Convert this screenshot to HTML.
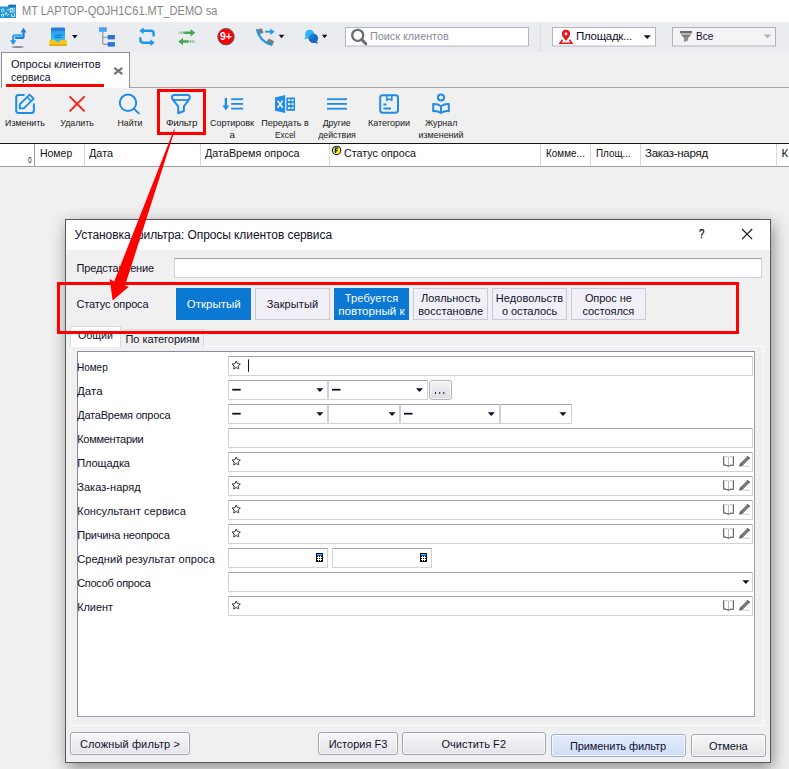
<!DOCTYPE html>
<html>
<head>
<meta charset="utf-8">
<title>Filter</title>
<style>
*{box-sizing:border-box;margin:0;padding:0}
html,body{width:789px;height:769px;overflow:hidden;background:#f0f0f0;font-family:"Liberation Sans",sans-serif;}
.abs{position:absolute}
.t{position:absolute;white-space:nowrap;line-height:1}
#titlebar{left:0;top:0;width:789px;height:22px;background:#fff}
#tb1{left:0;top:22px;width:789px;height:30px;background:#ebecf0}
#tabrow{left:0;top:52px;width:789px;height:36px;background:#f0f0f0}
#tb2{left:0;top:88px;width:789px;height:55px;background:#f0f0f0}
#ghead{left:0;top:142.6px;width:789px;height:24.2px;background:#fff;border-top:1.6px solid #141414;border-bottom:1px solid #a0a0a0}
.gcol{position:absolute;top:144.2px;width:1px;height:21.6px;background:#d8d8d8}
.gh{position:absolute;top:148px;font-size:11.5px;color:#111;white-space:nowrap;line-height:1}
.lbl2{position:absolute;font-size:9.8px;color:#1a1a1a;text-align:center;line-height:12px;white-space:nowrap;transform:translateX(-50%)}
/* dialog */
#dlg{left:65px;top:219px;width:706px;height:544px;background:#f0f0f0;border:1px solid #5a5a5a;box-shadow:2px 5px 15px 0 rgba(0,0,0,.43)}
#dtitle{left:66px;top:220px;width:704px;height:30px;background:#fff}
.flabel{position:absolute;left:77.2px;font-size:11px;color:#10102a;white-space:nowrap;line-height:1}
.inp{position:absolute;height:20px;background:#fff;border:1px solid #d0d1dc;border-top-color:#9fa2b4}
.sbtn{position:absolute;top:288px;height:31.6px;width:75px;font-size:11px;text-align:center;line-height:13px;white-space:nowrap}
.sbtn.on{background:#0b78d4;color:#fff}
.sbtn.off{background:#f0f0f6;color:#10102a;border:1px solid #c9cad9}
.btn{position:absolute;height:23px;border:1px solid #a6a6b0;border-radius:3px;background:linear-gradient(#f8f8fa,#e3e3e9);font-size:11px;color:#10102a;text-align:center;white-space:nowrap;box-shadow:inset 0 0 0 1px rgba(255,255,255,.7)}
.arr{position:absolute;width:0;height:0;border-left:3.5px solid transparent;border-right:3.5px solid transparent;border-top:4px solid #10102a}
/*FIT*/
#ttl{transform:scaleX(0.8950);transform-origin:0 0}
#srch{transform:scaleX(0.9397);transform-origin:0 0}
#cmb1{letter-spacing:-0.288px}
#cmb2{transform:scaleX(0.8826);transform-origin:0 0}
#tab_0{letter-spacing:-0.020px}
#tab_1{display:inline-block;transform:scaleX(0.9554);transform-origin:0 0}
#tl1_0{display:inline-block;transform:scaleX(0.9004);transform-origin:center}
#tl2_0{display:inline-block;transform:scaleX(0.8956);transform-origin:center}
#tl3_0{display:inline-block;transform:scaleX(0.8939);transform-origin:center}
#tl4_0{letter-spacing:-0.284px}
#tl5_0{display:inline-block;transform:scaleX(0.9167);transform-origin:center}
#tl6_0{display:inline-block;transform:scaleX(0.9237);transform-origin:center}
#tl6_1{display:inline-block;transform:scaleX(0.8553);transform-origin:center}
#tl7_0{display:inline-block;transform:scaleX(0.8956);transform-origin:center}
#tl7_1{display:inline-block;transform:scaleX(0.8973);transform-origin:center}
#tl8_0{display:inline-block;transform:scaleX(0.9158);transform-origin:center}
#tl9_0{display:inline-block;transform:scaleX(0.9035);transform-origin:center}
#tl9_1{display:inline-block;transform:scaleX(0.9154);transform-origin:center}
#gh1{transform:scaleX(0.9094);transform-origin:0 0}
#gh2{transform:scaleX(0.9463);transform-origin:0 0}
#gh3{transform:scaleX(0.9382);transform-origin:0 0}
#gh4{transform:scaleX(0.9350);transform-origin:0 0}
#gh5{transform:scaleX(0.8666);transform-origin:0 0}
#gh6{transform:scaleX(0.8579);transform-origin:0 0}
#gh7{letter-spacing:-0.285px}
#dttl{letter-spacing:-0.079px}
#l_pred{letter-spacing:-0.136px}
#l_stat{letter-spacing:-0.139px}
#sb1_0{display:inline-block;transform:scaleX(1.0440);transform-origin:center}
#sb2_0{letter-spacing:0.130px}
#sb3_0{letter-spacing:0.215px}
#sb3_1{display:inline-block;transform:scaleX(1.0537);transform-origin:center}
#sb4_0{letter-spacing:-0.034px}
#sb4_1{letter-spacing:0.080px}
#sb5_0{letter-spacing:0.102px}
#sb5_1{letter-spacing:-0.058px}
#sb6_0{letter-spacing:-0.086px}
#sb6_1{letter-spacing:-0.051px}
#tb_a{transform:scaleX(0.9640);transform-origin:0 0}
#tb_b{letter-spacing:-0.060px}
#fl0{transform:scaleX(0.9067);transform-origin:0 0}
#fl1{transform:scaleX(1.0509);transform-origin:0 0}
#fl2{letter-spacing:-0.203px}
#fl3{letter-spacing:-0.270px}
#fl4{letter-spacing:-0.075px}
#fl5{letter-spacing:0.052px}
#fl6{letter-spacing:0.078px}
#fl7{letter-spacing:-0.188px}
#fl8{letter-spacing:0.067px}
#fl9{letter-spacing:-0.279px}
#fl10{letter-spacing:-0.081px}
#b1{letter-spacing:0.131px}
#b2{letter-spacing:0.004px}
#b3{letter-spacing:0.082px}
#b4{letter-spacing:-0.090px}
#b5{letter-spacing:-0.154px}
/*ENDFIT*/
</style>
</head>
<body>
<!-- ===== title bar ===== -->
<div id="titlebar" class="abs"></div>
<svg class="abs" style="left:0;top:0" width="18" height="22" viewBox="0 0 18 22">
  <path d="M0 6.4 H7.8 L9 4.8 H16 V17.9 H0 Z" fill="#1f97d6"/>
  <path d="M7.8 6.4 L9 4.8 H16 V6.9 H7.8 Z" fill="#1677b6"/>
  <g fill="none" stroke="#e6f4fc" stroke-width="0.9">
    <circle cx="2.8" cy="10.4" r="1.4"/><circle cx="2.6" cy="15.2" r="1.1"/><circle cx="6" cy="13.6" r="0.9"/>
    <path d="M7 10 H9 L10 8.6 H12 M10.8 8 V12 M12.6 8 V10.6 M14.2 7.8 V11.4 M9.6 12 H14.6 M7.4 15.6 L9.2 13.8 M11.6 14 V16.4 H14.6 V13.6"/>
  </g>
</svg>
<div class="t" id="ttl" style="left:22px;top:5px;font-size:12.3px;color:#858585">MT LAPTOP-QOJH1C61.MT_DEMO sa</div>

<!-- ===== toolbar 1 ===== -->
<div id="tb1" class="abs"></div>

<svg class="abs" style="left:0;top:22px" width="789" height="30" viewBox="0 22 789 30">
  <!-- icon1: exchange arrows -->
  <ellipse cx="17.7" cy="47" rx="6.3" ry="0.9" fill="#8d9096"/>
  <path d="M13.2 41 V36.7 Q13.2 35.3 14.6 35.3 H21.8" fill="none" stroke="#3aa0f0" stroke-width="2.3"/>
  <path d="M23.5 32 V36.4 Q23.5 37.8 22.1 37.8 H15.2" fill="none" stroke="#1b83df" stroke-width="2.3"/>
  <path d="M23.5 27.5 L26.4 32.4 H20.6 Z" fill="#1b83df"/>
  <path d="M13.2 45 L10 40.2 H16.4 Z" fill="#2a95ec"/>
  <!-- icon2: inbox -->
  <defs><linearGradient id="gbx" x1="0" y1="0" x2="0" y2="1"><stop offset="0" stop-color="#2b86e6"/><stop offset=".35" stop-color="#2ba6f0"/><stop offset="1" stop-color="#2cc2f6"/></linearGradient></defs>
  <rect x="51" y="27.6" width="14" height="14.6" rx="1.2" fill="url(#gbx)"/>
  <rect x="51" y="28.2" width="14" height="2.3" fill="#2a78dc"/>
  <rect x="54.6" y="34.7" width="7.8" height="0.9" fill="#1a62bc"/>
  <rect x="54.6" y="36.9" width="6.4" height="0.9" fill="#1a62bc"/>
  <path d="M49.4 39.8 H55 Q55.6 42 58 42 Q60.4 42 61 39.8 H66.8 V45 Q66.8 46 65.8 46 H50.4 Q49.4 46 49.4 45 Z" fill="#f6c619"/>
  <path d="M49.4 44.2 H66.8 V45 Q66.8 46 65.8 46 H50.4 Q49.4 46 49.4 45 Z" fill="#e3ab12"/>
  <path d="M72 35 H77.6 L74.8 38.4 Z" fill="#10102a"/>
  <!-- icon3: tree -->
  <path d="M102.8 31.5 V43 Q102.8 44.4 104.2 44.4 H108 M102.8 37.2 H108" fill="none" stroke="#8a8f99" stroke-width="1.1"/>
  <rect x="99" y="27.3" width="7.8" height="4.5" fill="#42a3f4"/>
  <rect x="107.7" y="35" width="7.2" height="4.4" fill="#2b74d6"/>
  <rect x="107.7" y="42.1" width="7.2" height="4.5" fill="#2b74d6"/>
  <!-- icon4: repeat -->
  <g fill="none" stroke="#1e96e8" stroke-width="2.4">
    <path d="M143 30.8 H151 Q153.6 30.8 153.6 33.4 V36.6"/>
    <path d="M151 42.7 H143 Q140.4 42.7 140.4 40.1 V37.2"/>
  </g>
  <path d="M139.3 30.8 L143.6 27.4 V34.2 Z" fill="#1e96e8"/>
  <path d="M154.7 42.7 L150.4 39.3 V46.1 Z" fill="#1e96e8"/>
  <!-- icon5: green arrows -->
  <g fill="#47a653">
    <path d="M195.3 32.7 L190.6 29 V31.5 H184.2 V33.9 H190.6 V36.4 Z"/>
    <rect x="178.6" y="31.5" width="1.3" height="2.4" opacity=".45"/><rect x="180.6" y="31.5" width="1.3" height="2.4" opacity=".6"/><rect x="182.5" y="31.5" width="1.3" height="2.4" opacity=".8"/>
    <path d="M178.3 41.5 L183 37.8 V40.3 H188.8 V42.7 H183 V45.2 Z"/>
    <rect x="189.7" y="40.3" width="1.2" height="2.4" opacity=".9"/><rect x="191.6" y="40.3" width="1.2" height="2.4" opacity=".75"/><rect x="193.5" y="40.3" width="1.2" height="2.4" opacity=".6"/>
  </g>
  <!-- icon6: red circle -->
  <circle cx="226" cy="36.7" r="8.2" fill="#fb0007" stroke="#5a5a5a" stroke-width="1"/>
  <text x="225.9" y="40.3" font-family="Liberation Sans, sans-serif" font-weight="bold" font-size="10.5" fill="#fff" text-anchor="middle">9+</text>
  <!-- icon7: phone -->
  <path d="M257.4 29.4 L261.6 28.2 L263.6 32.6 L259.6 34.6 Z" fill="#7d7d7d"/>
  <path d="M268.8 38.6 L274.2 41.2 L272.6 45 L266.4 42.2 Z" fill="#7d7d7d"/>
  <path d="M256.8 29.2 Q259.6 41.6 272.2 45" fill="none" stroke="#1e96e8" stroke-width="2.2"/>
  <path d="M265.2 31.7 H271" stroke="#1e96e8" stroke-width="1.9" fill="none"/>
  <path d="M274.5 31.7 L270.4 28.4 V35 Z" fill="#1e96e8"/>
  <path d="M278.7 34.8 H284.4 L281.55 38.3 Z" fill="#10102a"/>
  <!-- icon8: chat -->
  <path d="M304.2 39.2 L306.2 35.6 L308.6 38.2 Z" fill="#33b5f5"/>
  <circle cx="309.7" cy="34.4" r="4.7" fill="#33b5f5"/>
  <path d="M317.9 43.8 L313.6 42.4 L316.4 40 Z" fill="#1769c2"/>
  <circle cx="313.4" cy="38.4" r="4.7" fill="#1769c2"/>
  <path d="M309.2 36.3 A4.7 4.7 0 0 1 314.3 34.6 A4.7 4.7 0 0 1 309.7 39.1 Z" fill="#1b7fd6"/>
  <path d="M321.8 34.8 H327.4 L324.6 38.3 Z" fill="#10102a"/>
  <!-- search box -->
  <rect x="345.5" y="27.5" width="183" height="18.5" fill="#fff" stroke="#b2b6c0" stroke-width="1"/>
  <circle cx="357.7" cy="35.3" r="5.5" fill="none" stroke="#6a6f6e" stroke-width="2.3"/>
  <path d="M361.8 39.6 L365.8 43.8" stroke="#6a6f6e" stroke-width="3" stroke-linecap="round"/>
  <!-- separator -->
  <rect x="540" y="23" width="1" height="28.5" fill="#dbdce1"/>
  <!-- combo 1 -->
  <rect x="552.5" y="27.5" width="103" height="18.5" fill="#fff" stroke="#b2b6c0" stroke-width="1"/>
  <path d="M566 41 C563 37.4 561.9 35.6 561.9 33.8 A4.1 4.1 0 0 1 570.1 33.8 C570.1 35.6 569 37.4 566 41 Z" fill="#e8151b"/>
  <circle cx="566" cy="33.9" r="1.4" fill="#fff"/>
  <path d="M562.6 39.8 L560 43.3 H572 L569.4 39.8" fill="none" stroke="#e8151b" stroke-width="1.5"/>
  <path d="M643.6 35.2 H650.8 L647.2 39 Z" fill="#10102a"/>
  <!-- combo 2 -->
  <rect x="672.5" y="27.5" width="103" height="18.5" fill="#f4f4f6" stroke="#b2b2b8" stroke-width="1"/>
  <defs><linearGradient id="gfl" x1="0" y1="0" x2="0" y2="1"><stop offset="0" stop-color="#666"/><stop offset="1" stop-color="#9c9c9c"/></linearGradient></defs><path d="M681 31 H691 Q692.2 31 692.2 32.2 Q692.2 33.6 691 33.6 H681 Q679.8 33.6 679.8 32.2 Q679.8 31 681 31 Z M680.6 34.4 H691.4 L688.1 38 V40.6 L684 42.2 V38 Z" fill="url(#gfl)"/>
  <path d="M763.8 34.6 H771.2 L767.5 38.2 Z" fill="#b0b0b0"/>
</svg>
<div class="t" id="srch" style="left:370px;top:31.2px;font-size:11.5px;color:#8a8a98">Поиск клиентов</div>
<div class="t" id="cmb1" style="left:576px;top:31px;font-size:11.5px;color:#10102a">Площадк...</div>
<div class="t" id="cmb2" style="left:696.4px;top:31px;font-size:11.5px;color:#10102a">Все</div>
<div id="tabrow" class="abs"></div>
<!-- tab -->
<div class="abs" style="left:130px;top:87px;width:659px;height:1px;background:#a6a6a6"></div>
<div class="abs" style="left:1px;top:52px;width:129px;height:36px;background:#fff;border:1px solid #8e8e8e;border-bottom:none"></div>
<div class="t" style="left:11px;top:57.7px;font-size:11px;line-height:13px;color:#10102a;white-space:normal;width:100px"><span id="tab_0">Опросы клиентов</span><br><span id="tab_1">сервиса</span></div>
<div class="abs" style="left:6px;top:84px;width:98px;height:2.6px;background:#f00"></div>
<svg class="abs" style="left:112px;top:65px" width="13" height="12" viewBox="112 65 13 12"><path d="M114.3 67.8 L122.3 74.2 M122.3 67.8 L114.3 74.2" stroke="#757575" stroke-width="2.2" fill="none"/></svg>

<div id="tb2" class="abs"></div>
<svg class="abs" style="left:0;top:88px" width="789" height="55" viewBox="0 88 789 55">
 <g fill="none" stroke="#1e8ce8" stroke-width="2" stroke-linejoin="round">
  <!-- edit -->
  <path d="M24.6 95.1 H18.6 Q16.2 95.1 16.2 97.5 V110.6 Q16.2 113 18.6 113 H31.5 Q33.9 113 33.9 110.6 V103.6" stroke-linecap="butt"/>
  <path d="M19.8 104.4 L29.6 94.6 L33.6 98.6 L23.8 108.4 H19.8 Z" stroke-width="1.9"/>
  <path d="M27.3 97.3 L31 101" stroke-width="1.5"/>
  <!-- search -->
  <circle cx="128" cy="102.8" r="8.2"/>
  <path d="M133.8 108.6 L138.8 113.4" stroke-linecap="round"/>
  <!-- filter -->
  <path d="M174.5 95.1 H187.3 Q189.8 95.1 189.8 97.5 Q189.8 98.8 188.8 99.8 L183.9 106.4 V111 L178.2 113.3 V106.4 L173 99.8 Q172 98.8 172 97.5 Q172 95.1 174.5 95.1 Z"/>
  <path d="M173 100 H188.8" stroke-width="1.8"/>
  <!-- categories -->
  <rect x="380.2" y="95.3" width="17.8" height="17.4" rx="2.4"/>
  <path d="M386.8 95.3 V100.4 L389.3 98.9 L391.8 100.4 V95.3" stroke-width="1.5"/>
  <path d="M383.4 104.6 H386.6 M383.4 108.4 H391"/>
  <!-- journal -->
  <circle cx="441" cy="97.5" r="3.1"/>
  <path d="M441 106.2 Q437 103.4 433.2 104 V111.2 Q437 110.6 441 113 Q445 110.6 448.8 111.2 V104 Q445 103.4 441 106.2 V112.8"/>
 </g>
 <!-- delete -->
 <path d="M69.6 96.3 L84.6 111.3 M84.6 96.3 L69.6 111.3" stroke="#ff1a1a" stroke-width="1.9" fill="none"/>
 <!-- sort -->
 <g fill="#1e8ce8">
  <rect x="224.7" y="98" width="2.3" height="9.4"/><path d="M222.4 105.4 H229.3 L225.85 110.2 Z"/>
  <rect x="231.2" y="98.3" width="12" height="1.8"/><rect x="231.2" y="103" width="12" height="1.8"/><rect x="231.2" y="107.7" width="12" height="1.8"/>
  <!-- hamburger -->
  <rect x="327" y="98.3" width="20" height="1.8"/><rect x="327" y="103" width="20" height="1.8"/><rect x="327" y="107.8" width="20" height="1.8"/>
  <!-- excel -->
  <path d="M275 97.5 L285.2 95 V113.1 L275 110.8 Z"/>
  <rect x="286.4" y="97.5" width="8.6" height="13.3"/>
 </g>
 <path d="M277.6 100.6 L282.6 107.8 M282.6 100.6 L277.6 107.8" stroke="#fff" stroke-width="1.5" fill="none"/>
 <g fill="#f0f0f0"><rect x="288" y="99.2" width="2.2" height="2"/><rect x="291.4" y="99.2" width="2.2" height="2"/><rect x="288" y="103.1" width="2.2" height="2"/><rect x="291.4" y="103.1" width="2.2" height="2"/><rect x="288" y="107" width="2.2" height="2"/><rect x="291.4" y="107" width="2.2" height="2"/></g>
 <!-- red box -->
 <rect x="158.5" y="90.5" width="46" height="43" fill="none" stroke="#f00" stroke-width="3"/>
</svg>
<div class="lbl2" style="left:25.3px;top:117px"><span id="tl1_0">Изменить</span></div>
<div class="lbl2" style="left:76.7px;top:117px"><span id="tl2_0">Удалить</span></div>
<div class="lbl2" style="left:129.6px;top:117px"><span id="tl3_0">Найти</span></div>
<div class="lbl2" style="left:181.6px;top:117px"><span id="tl4_0">Фильтр</span></div>
<div class="lbl2" style="left:232.3px;top:117px"><span id="tl5_0">Сортировк</span><br><span id="tl5_1">а</span></div>
<div class="lbl2" style="left:285px;top:117px"><span id="tl6_0">Передать в</span><br><span id="tl6_1">Excel</span></div>
<div class="lbl2" style="left:336.7px;top:117px"><span id="tl7_0">Другие</span><br><span id="tl7_1">действия</span></div>
<div class="lbl2" style="left:389.3px;top:117px"><span id="tl8_0">Категории</span></div>
<div class="lbl2" style="left:440.8px;top:117px"><span id="tl9_0">Журнал</span><br><span id="tl9_1">изменений</span></div>

<div id="ghead" class="abs"></div>
<div class="gcol" style="left:34px;background:#9a9a9a"></div>
<div class="gcol" style="left:84px"></div><div class="gcol" style="left:200px"></div><div class="gcol" style="left:329px"></div><div class="gcol" style="left:540px"></div><div class="gcol" style="left:590px"></div><div class="gcol" style="left:640px"></div><div class="gcol" style="left:776px"></div>
<div class="t" style="left:28px;top:156.4px;font-size:9px;color:#111;transform:scaleX(.72);transform-origin:0 0">0</div>
<div class="gh" id="gh1" style="left:39.5px">Номер</div>
<div class="gh" id="gh2" style="left:89px">Дата</div>
<div class="gh" id="gh3" style="left:205px">ДатаВремя опроса</div>
<div class="gh" id="gh4" style="left:343.5px">Статус опроса</div>
<div class="gh" id="gh5" style="left:545.5px">Комме...</div>
<div class="gh" id="gh6" style="left:595.5px">Площ...</div>
<div class="gh" id="gh7" style="left:645px">Заказ-наряд</div>
<div class="gh" style="left:781.5px">К</div>
<svg class="abs" style="left:331px;top:145px" width="11" height="11" viewBox="0 0 11 11"><circle cx="5.6" cy="5.4" r="4.2" fill="#fff200" stroke="#14146e" stroke-width="1.1"/><path d="M4.5 8 V3.1 H7.2 M4.5 5.5 H6.6" stroke="#14146e" stroke-width="1.3" fill="none"/></svg>


<!-- dialog -->
<div id="dlg" class="abs"></div>
<div id="dtitle" class="abs"></div>
<div class="t" id="dttl" style="left:74.5px;top:229px;font-size:12px;color:#10102a">Установка фильтра: Опросы клиентов сервиса</div>
<div class="t" style="left:699px;top:227.4px;font-size:13.5px;color:#000;-webkit-text-stroke:.25px #000;transform:scaleX(.72);transform-origin:0 0">?</div>
<svg class="abs" style="left:740px;top:227px" width="14" height="14" viewBox="740 227 14 14"><path d="M742 229 L752.2 239.2 M752.2 229 L742 239.2" stroke="#111" stroke-width="1.1" fill="none"/></svg>
<div class="flabel" id="l_pred" style="top:262.5px;left:76.5px">Представление</div>
<div class="inp" style="left:174px;top:258px;width:588px"></div>
<div class="flabel" id="l_stat" style="top:298.7px;left:76.5px">Статус опроса</div>
<div class="sbtn on" style="left:176px;padding-top:9.8px"><span id="sb1_0">Открытый</span></div>
<div class="sbtn off" style="left:255px;width:75px;padding-top:8.8px"><span id="sb2_0">Закрытый</span></div>
<div class="sbtn on" style="left:334px;padding-top:3.6px"><span id="sb3_0">Требуется</span><br><span id="sb3_1">повторный к</span></div>
<div class="sbtn off" style="left:413.3px;padding-top:2.6px"><span id="sb4_0">Лояльность</span><br><span id="sb4_1">восстановле</span></div>
<div class="sbtn off" style="left:492px;padding-top:2.6px"><span id="sb5_0">Недовольств</span><br><span id="sb5_1">о осталось</span></div>
<div class="sbtn off" style="left:570.8px;padding-top:2.6px"><span id="sb6_0">Опрос не</span><br><span id="sb6_1">состоялся</span></div>
<!-- tabs -->
<div class="abs" style="left:70px;top:346px;width:694px;height:380px;border:1px solid #fbfbfb;background:#f0f0f0"></div>
<div class="abs" style="left:120px;top:328.5px;width:84px;height:18px;border:1px solid #dadada;border-bottom:none;background:#f0f0f0"></div>
<div class="abs" style="left:70px;top:326px;width:51px;height:21px;border:1px solid #dadada;border-bottom:none;background:#fff"></div>
<div class="flabel" id="tb_a" style="left:77.5px;top:330.3px">Общий</div>
<div class="flabel" id="tb_b" style="left:125.5px;top:333.7px">По категориям</div>
<div class="abs" style="left:77px;top:351px;width:678px;height:365.5px;background:#fff;border:1px solid #dcdde3;border-top:1.5px solid #8a8e9c;border-left:1.5px solid #8a8e9c;border-right:1.5px solid #9a9eac;border-bottom:1px solid #9a9eac"></div>
<div class="flabel" id="fl0" style="top:361.5px">Номер</div>
<div class="flabel" id="fl1" style="top:385.5px">Дата</div>
<div class="flabel" id="fl2" style="top:409.5px">ДатаВремя опроса</div>
<div class="flabel" id="fl3" style="top:433.5px">Комментарии</div>
<div class="flabel" id="fl4" style="top:457.5px">Площадка</div>
<div class="flabel" id="fl5" style="top:481.5px">Заказ-наряд</div>
<div class="flabel" id="fl6" style="top:505.5px">Консультант сервиса</div>
<div class="flabel" id="fl7" style="top:529.5px">Причина неопроса</div>
<div class="flabel" id="fl8" style="top:553.5px">Средний результат опроса</div>
<div class="flabel" id="fl9" style="top:577.5px">Способ опроса</div>
<div class="flabel" id="fl10" style="top:601.5px">Клиент</div>
<div class="inp" style="left:228.2px;top:356px;width:525px"></div>
<div class="inp" style="left:228.2px;top:380px;width:99.5px"></div>
<div class="inp" style="left:327.7px;top:380px;width:100px"></div>
<div class="inp" style="left:228.2px;top:404px;width:99.5px"></div>
<div class="inp" style="left:327.7px;top:404px;width:72px"></div>
<div class="inp" style="left:399.7px;top:404px;width:100px"></div>
<div class="inp" style="left:499.7px;top:404px;width:72px"></div>
<div class="inp" style="left:228.2px;top:428px;width:525px"></div>
<div class="inp" style="left:228.2px;top:452px;width:525px"></div>
<div class="inp" style="left:228.2px;top:476px;width:525px"></div>
<div class="inp" style="left:228.2px;top:500px;width:525px"></div>
<div class="inp" style="left:228.2px;top:524px;width:525px"></div>
<div class="inp" style="left:228.2px;top:572px;width:525px"></div>
<div class="inp" style="left:228.2px;top:596px;width:525px"></div>
<div class="inp" style="left:228.2px;top:548px;width:99.5px"></div>
<div class="inp" style="left:332px;top:548px;width:99.5px"></div>
<svg class="abs" style="left:0;top:350px" width="789" height="280" viewBox="0 350 789 280">
<path transform="translate(236.2 365.4)" d="M0 -4.3 L1.29 -1.78 L4.09 -1.33 L2.09 0.68 L2.53 3.48 L0 2.2 L-2.53 3.48 L-2.09 0.68 L-4.09 -1.33 L-1.29 -1.78 Z" fill="none" stroke="#383838" stroke-width="1" stroke-linejoin="round"/>
<path transform="translate(236.2 461.4)" d="M0 -4.3 L1.29 -1.78 L4.09 -1.33 L2.09 0.68 L2.53 3.48 L0 2.2 L-2.53 3.48 L-2.09 0.68 L-4.09 -1.33 L-1.29 -1.78 Z" fill="none" stroke="#383838" stroke-width="1" stroke-linejoin="round"/>
<path transform="translate(236.2 485.4)" d="M0 -4.3 L1.29 -1.78 L4.09 -1.33 L2.09 0.68 L2.53 3.48 L0 2.2 L-2.53 3.48 L-2.09 0.68 L-4.09 -1.33 L-1.29 -1.78 Z" fill="none" stroke="#383838" stroke-width="1" stroke-linejoin="round"/>
<path transform="translate(236.2 509.4)" d="M0 -4.3 L1.29 -1.78 L4.09 -1.33 L2.09 0.68 L2.53 3.48 L0 2.2 L-2.53 3.48 L-2.09 0.68 L-4.09 -1.33 L-1.29 -1.78 Z" fill="none" stroke="#383838" stroke-width="1" stroke-linejoin="round"/>
<path transform="translate(236.2 533.4)" d="M0 -4.3 L1.29 -1.78 L4.09 -1.33 L2.09 0.68 L2.53 3.48 L0 2.2 L-2.53 3.48 L-2.09 0.68 L-4.09 -1.33 L-1.29 -1.78 Z" fill="none" stroke="#383838" stroke-width="1" stroke-linejoin="round"/>
<path transform="translate(236.2 605.4)" d="M0 -4.3 L1.29 -1.78 L4.09 -1.33 L2.09 0.68 L2.53 3.48 L0 2.2 L-2.53 3.48 L-2.09 0.68 L-4.09 -1.33 L-1.29 -1.78 Z" fill="none" stroke="#383838" stroke-width="1" stroke-linejoin="round"/>
<g transform="translate(0 461.3)"><path d="M723.6 -4.6 Q726 -5.4 728.5 -4.2 Q731 -5.4 733.4 -4.6" fill="none" stroke="#c4c4c4" stroke-width="0.9"/><path d="M728.5 -4.2 V4.4" stroke="#b4b4b4" stroke-width="0.9"/><path d="M723.6 -4.8 V3.8 Q726.2 3.4 728.5 5 Q730.8 3.4 733.4 3.8 V-4.8" fill="none" stroke="#6c6c6c" stroke-width="1.25"/><path d="M739.2 5.3 L740.2 2 L747.6 -5.4 L750 -3 L742.6 4.4 Z" fill="#7a7a7a"/><path d="M747.6 -5.4 L750 -3 L749 -2 L746.6 -4.4 Z" fill="#5c5c5c"/><path d="M739.2 5.3 L740.2 2 L742.6 4.4 Z" fill="#5c5c5c"/><path d="M742.6 5 H750" stroke="#c2c2c2" stroke-width="0.8"/></g>
<g transform="translate(0 485.3)"><path d="M723.6 -4.6 Q726 -5.4 728.5 -4.2 Q731 -5.4 733.4 -4.6" fill="none" stroke="#c4c4c4" stroke-width="0.9"/><path d="M728.5 -4.2 V4.4" stroke="#b4b4b4" stroke-width="0.9"/><path d="M723.6 -4.8 V3.8 Q726.2 3.4 728.5 5 Q730.8 3.4 733.4 3.8 V-4.8" fill="none" stroke="#6c6c6c" stroke-width="1.25"/><path d="M739.2 5.3 L740.2 2 L747.6 -5.4 L750 -3 L742.6 4.4 Z" fill="#7a7a7a"/><path d="M747.6 -5.4 L750 -3 L749 -2 L746.6 -4.4 Z" fill="#5c5c5c"/><path d="M739.2 5.3 L740.2 2 L742.6 4.4 Z" fill="#5c5c5c"/><path d="M742.6 5 H750" stroke="#c2c2c2" stroke-width="0.8"/></g>
<g transform="translate(0 509.3)"><path d="M723.6 -4.6 Q726 -5.4 728.5 -4.2 Q731 -5.4 733.4 -4.6" fill="none" stroke="#c4c4c4" stroke-width="0.9"/><path d="M728.5 -4.2 V4.4" stroke="#b4b4b4" stroke-width="0.9"/><path d="M723.6 -4.8 V3.8 Q726.2 3.4 728.5 5 Q730.8 3.4 733.4 3.8 V-4.8" fill="none" stroke="#6c6c6c" stroke-width="1.25"/><path d="M739.2 5.3 L740.2 2 L747.6 -5.4 L750 -3 L742.6 4.4 Z" fill="#7a7a7a"/><path d="M747.6 -5.4 L750 -3 L749 -2 L746.6 -4.4 Z" fill="#5c5c5c"/><path d="M739.2 5.3 L740.2 2 L742.6 4.4 Z" fill="#5c5c5c"/><path d="M742.6 5 H750" stroke="#c2c2c2" stroke-width="0.8"/></g>
<g transform="translate(0 533.3)"><path d="M723.6 -4.6 Q726 -5.4 728.5 -4.2 Q731 -5.4 733.4 -4.6" fill="none" stroke="#c4c4c4" stroke-width="0.9"/><path d="M728.5 -4.2 V4.4" stroke="#b4b4b4" stroke-width="0.9"/><path d="M723.6 -4.8 V3.8 Q726.2 3.4 728.5 5 Q730.8 3.4 733.4 3.8 V-4.8" fill="none" stroke="#6c6c6c" stroke-width="1.25"/><path d="M739.2 5.3 L740.2 2 L747.6 -5.4 L750 -3 L742.6 4.4 Z" fill="#7a7a7a"/><path d="M747.6 -5.4 L750 -3 L749 -2 L746.6 -4.4 Z" fill="#5c5c5c"/><path d="M739.2 5.3 L740.2 2 L742.6 4.4 Z" fill="#5c5c5c"/><path d="M742.6 5 H750" stroke="#c2c2c2" stroke-width="0.8"/></g>
<g transform="translate(0 605.3)"><path d="M723.6 -4.6 Q726 -5.4 728.5 -4.2 Q731 -5.4 733.4 -4.6" fill="none" stroke="#c4c4c4" stroke-width="0.9"/><path d="M728.5 -4.2 V4.4" stroke="#b4b4b4" stroke-width="0.9"/><path d="M723.6 -4.8 V3.8 Q726.2 3.4 728.5 5 Q730.8 3.4 733.4 3.8 V-4.8" fill="none" stroke="#6c6c6c" stroke-width="1.25"/><path d="M739.2 5.3 L740.2 2 L747.6 -5.4 L750 -3 L742.6 4.4 Z" fill="#7a7a7a"/><path d="M747.6 -5.4 L750 -3 L749 -2 L746.6 -4.4 Z" fill="#5c5c5c"/><path d="M739.2 5.3 L740.2 2 L742.6 4.4 Z" fill="#5c5c5c"/><path d="M742.6 5 H750" stroke="#c2c2c2" stroke-width="0.8"/></g>
<rect x="248" y="359.4" width="1" height="12.4" fill="#111"/>
<rect x="232.2" y="388.79999999999995" width="8.5" height="1.8" fill="#10102a"/><path d="M316.4 388.29999999999995 h7 l-3.5 3.6 Z" fill="#10102a"/><rect x="332" y="388.79999999999995" width="8.5" height="1.8" fill="#10102a"/><path d="M416 388.29999999999995 h7 l-3.5 3.6 Z" fill="#10102a"/><rect x="232.2" y="412.79999999999995" width="8.5" height="1.8" fill="#10102a"/><path d="M316.4 412.29999999999995 h7 l-3.5 3.6 Z" fill="#10102a"/><path d="M388.6 412.29999999999995 h7 l-3.5 3.6 Z" fill="#10102a"/><rect x="404" y="412.79999999999995" width="8.5" height="1.8" fill="#10102a"/><path d="M487.8 412.29999999999995 h7 l-3.5 3.6 Z" fill="#10102a"/><path d="M559.4 412.29999999999995 h7 l-3.5 3.6 Z" fill="#10102a"/><path d="M742.4 580.3 h7 l-3.5 3.6 Z" fill="#10102a"/><g transform="translate(316 553)"><rect x="0" y="0" width="7" height="9" fill="#000"/><rect x="1" y="1" width="5" height="1" fill="#00e5ff"/><rect x="1" y="2" width="5" height="1" fill="#1030ff"/><g fill="#fff"><rect x="2" y="3" width="1" height="5"/><rect x="4" y="3" width="1" height="5"/><rect x="1" y="4" width="5" height="1"/><rect x="1" y="6" width="5" height="1"/></g></g><g transform="translate(420 553)"><rect x="0" y="0" width="7" height="9" fill="#000"/><rect x="1" y="1" width="5" height="1" fill="#00e5ff"/><rect x="1" y="2" width="5" height="1" fill="#1030ff"/><g fill="#fff"><rect x="2" y="3" width="1" height="5"/><rect x="4" y="3" width="1" height="5"/><rect x="1" y="4" width="5" height="1"/><rect x="1" y="6" width="5" height="1"/></g></g></svg>
<div class="btn" style="left:428.6px;top:380.2px;width:23px;height:19.4px;border-color:#b2b4c0;background:linear-gradient(#f3f3f5,#dcdde3)"></div><div class="abs" style="left:434.6px;top:391.8px;width:1.5px;height:2.1px;background:#1a1a4a;box-shadow:4.2px 0 0 #1a1a4a,8.3px 0 0 #1a1a4a"></div>
<div class="btn" style="left:70px;top:732px;width:120px;line-height:22px"><span id="b1">Сложный фильтр &gt;</span></div>
<div class="btn" style="left:318px;top:732px;width:80px;line-height:22px"><span id="b2">История F3</span></div>
<div class="btn" style="left:402px;top:732px;width:143.5px;line-height:22px"><span id="b3">Очистить F2</span></div>
<div class="btn" style="left:550.5px;top:734px;width:135px;line-height:22px;background:linear-gradient(#e3ecfc,#cfdcf6);border-color:#9fb0d0"><span id="b4">Применить фильтр</span></div>
<div class="btn" style="left:690.5px;top:734px;width:75.5px;line-height:22px"><span id="b5">Отмена</span></div>
<!-- annotation overlay -->
<svg class="abs" style="left:0;top:0;pointer-events:none" width="789" height="769" viewBox="0 0 789 769">
  <rect x="58.5" y="283.5" width="679" height="49" fill="none" stroke="#f00" stroke-width="3"/>
  <path d="M174 129.5 L175 129.5 L125 285.6 L128.8 286.7 L112.6 300.6 L109.7 279 L114.2 281.4 Z" fill="#f00"/>
</svg>

</body>
</html>
